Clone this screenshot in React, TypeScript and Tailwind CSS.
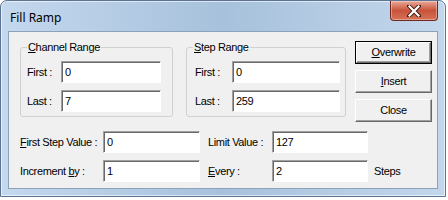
import React from 'react';

const font = { fontFamily: '"Liberation Sans", Arial, sans-serif' };

function Field({ value, className }: { value: string; className: string }) {
    return (
        <div
            className={`h-[22px] bg-white border border-t-[#a0a0a0] border-l-[#a0a0a0] border-r-white border-b-white shadow-[inset_1px_1px_0_#696969] pl-[3px] flex items-center text-[11px] text-black ${className}`}
        >
            {value}
        </div>
    );
}

function Btn({ children, isDefault }: { children: React.ReactNode; isDefault?: boolean }) {
    return (
        <div className={`h-[23px] w-[77px] ${isDefault ? 'border border-black' : ''}`}>
            <div className="h-full w-full bg-[#f0f0f0] border border-t-white border-l-white border-r-[#696969] border-b-[#696969] shadow-[inset_-1px_-1px_0_#a0a0a0] flex items-center justify-center text-[11px] text-black">
                {children}
            </div>
        </div>
    );
}

function Group({ title, children, className }: { title: React.ReactNode; children: React.ReactNode; className: string }) {
    return (
        <fieldset className={`border border-[#d0d0d0] rounded-[3px] h-[76px] ${className}`}>
            <legend className="ml-[6px] px-[1px] text-[11px] leading-[13px] text-black">{title}</legend>
            {children}
        </fieldset>
    );
}

export default function App() {
    return (
        <div className="w-[448px] h-[200px] bg-white tracking-[-0.35px]" style={font}>
            <div className="w-[446px] h-[197px] rounded-t-[7px] border border-[#5c7391] bg-gradient-to-r from-[#c4d8ee] via-[#a7c1dc] to-[#c3d7ec] px-[7px] flex flex-col shadow-[inset_0_0_0_1px_rgba(255,255,255,0.6)]">
                {/* title bar */}
                <div className="h-[30px] flex items-start justify-between">
                    <div className="pt-[8px] pl-[2px] text-[12px] text-black tracking-normal" style={{ fontFamily: '"Noto Sans", "Liberation Sans", sans-serif' }}>
                        Fill Ramp
                    </div>
                    <div className="w-[48px] h-[20px] rounded-b-[4px] border border-t-0 border-[#6e2a1c] bg-gradient-to-b from-[#e8a898] via-[#c8533a] to-[#d57255] flex items-center justify-center shadow-[inset_0_0_0_1px_rgba(255,255,255,0.35)]">
                        <svg width="14" height="12" viewBox="0 0 14 12">
                            <path d="M2 1 L12 11 M12 1 L2 11" stroke="#3a1a14" strokeWidth="4" strokeLinecap="square" />
                            <path d="M2.5 1.5 L11.5 10.5 M11.5 1.5 L2.5 10.5" stroke="white" strokeWidth="2.2" strokeLinecap="square" />
                        </svg>
                    </div>
                </div>
                {/* client area */}
                <div className="flex-1 mb-[7px] border border-[#8ca2bb] bg-[#f0f0f0] text-[11px] text-black">
                    <div className="flex pl-[11px] pt-[9px]">
                        <Group
                            className="w-[153px]"
                            title={<><span className="underline">C</span>hannel Range</>}
                        >
                            <div className="flex flex-col gap-[7px] pt-[7px] pl-[6px]">
                                <div className="flex items-center">
                                    <span className="w-[34px]">First :</span>
                                    <Field value="0" className="w-[100px]" />
                                </div>
                                <div className="flex items-center">
                                    <span className="w-[34px]">Last :</span>
                                    <Field value="7" className="w-[100px]" />
                                </div>
                            </div>
                        </Group>
                        <Group
                            className="w-[160px] ml-[13px]"
                            title={<><span className="underline">S</span>tep Range</>}
                        >
                            <div className="flex flex-col gap-[7px] pt-[7px] pl-[8px]">
                                <div className="flex items-center">
                                    <span className="w-[37px]">First :</span>
                                    <Field value="0" className="w-[108px]" />
                                </div>
                                <div className="flex items-center">
                                    <span className="w-[37px]">Last :</span>
                                    <Field value="259" className="w-[108px]" />
                                </div>
                            </div>
                        </Group>
                        <div className="ml-[9px] flex flex-col gap-[6px]">
                            <Btn isDefault>
                                <span className="underline">O</span>verwrite
                            </Btn>
                            <Btn>
                                <span className="underline">I</span>nsert
                            </Btn>
                            <Btn>Close</Btn>
                        </div>
                    </div>
                    <div className="flex flex-col gap-[7px] pl-[11px] pt-[9px]">
                        <div className="flex items-center">
                            <span className="w-[83px]">
                                <span className="underline">F</span>irst Step Value :
                            </span>
                            <Field value="0" className="w-[97px]" />
                            <span className="w-[64px] ml-[8px]">Limit Value :</span>
                            <Field value="127" className="w-[96px]" />
                        </div>
                        <div className="flex items-center">
                            <span className="w-[83px]">
                                Increment <span className="underline">b</span>y :
                            </span>
                            <Field value="1" className="w-[97px]" />
                            <span className="w-[64px] ml-[8px]">
                                <span className="underline">E</span>very :
                            </span>
                            <Field value="2" className="w-[96px]" />
                            <span className="ml-[6px]">Steps</span>
                        </div>
                    </div>
                </div>
            </div>
        </div>
    );
}
